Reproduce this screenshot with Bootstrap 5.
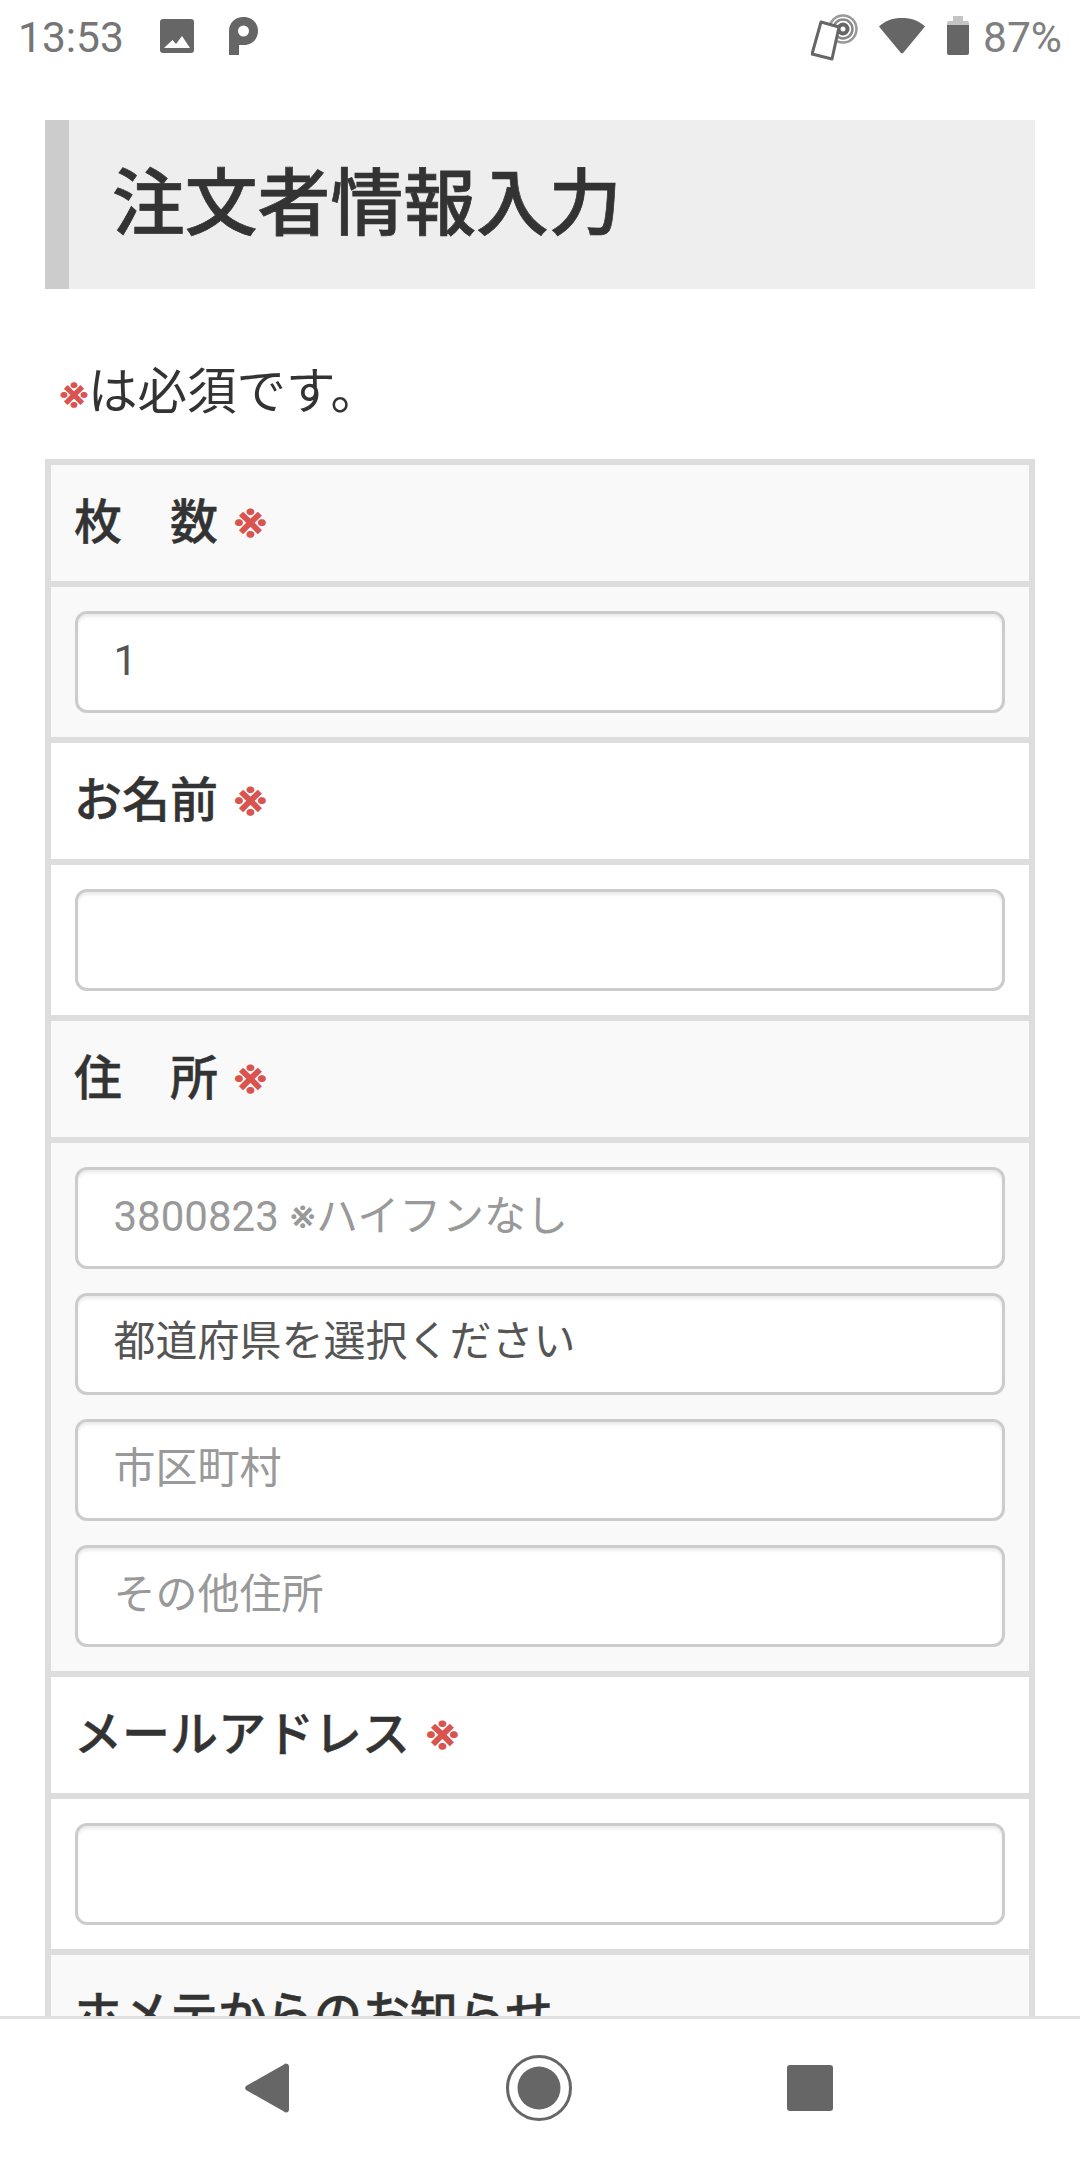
<!DOCTYPE html>
<html lang="ja">
<head>
<meta charset="utf-8">
<title>注文者情報入力</title>
<link href="https://cdn.jsdelivr.net/npm/bootstrap@5.3.0/dist/css/bootstrap.min.css" rel="stylesheet">
<style>
html,body{margin:0;background:#fff;}
body{font-family:Roboto,"Noto Sans CJK JP",sans-serif;color:#333;}
.screen{height:2160px;width:1080px;overflow:hidden;}
.statusbar{height:66px;padding:10px 18px 0 18px;color:#757575;font-size:42.5px;line-height:1;flex:none;}
.statusbar svg{display:block;fill:#666;}
.ic-img{margin-left:36px;margin-top:-4px;}
.ic-p{margin-left:35px;margin-top:-4px;}
.sb-pct{margin-left:14px;color:#808080;}
.ic-nfc{margin-top:-2px;}
.ic-wifi{margin-left:20px;margin-top:-6px;}
.ic-batt{margin-left:22px;margin-top:-6px;}
.page{padding:54px 45px 0 45px;min-height:0;}
.pagetitle{background:#eee;border-left:24px solid #ccc;height:169px;margin:0;padding-left:43px;font-size:72.8px;font-weight:500;-webkit-text-stroke:.7px #333;line-height:155px;color:#333;font-family:"Noto Sans CJK JP",sans-serif;}
.note{font-size:49.5px;line-height:72px;margin:63px 0 0 12px;height:107px;font-family:"Noto Sans CJK JP",sans-serif;}
.redmark{color:#d9534f;font-size:42px;font-family:Inter,sans-serif;font-weight:700;letter-spacing:-3px;}
.formtable{width:990px;margin:0;border:6px solid #ddd;}
.formtable th,.formtable td{border:6px solid #ddd;padding:0 23px 0 23px;}
.formtable th{height:122px;font-size:48px;font-weight:500;-webkit-text-stroke:.4px #333;line-height:60px;padding-bottom:6px;font-family:"Noto Sans CJK JP",sans-serif;color:#333;}
.formtable td{padding:24px 24px;}
.tint{background:#f9f9f9;}
.blank{background:#fff;}
.reqmark{color:#d9534f;-webkit-text-stroke:0;font-size:48px;font-weight:700;margin-left:13px;font-family:Inter,sans-serif;}
.field{height:102px;border:3px solid #ccc;border-radius:12px;background:#fff;box-shadow:inset 0 3px 3px rgba(0,0,0,.075);font-size:42px;line-height:1.4;color:#555;padding:0 35.500px 3px;font-family:Roboto,Inter,"Noto Sans CJK JP",sans-serif;}
.field::placeholder{color:#999;opacity:1;}
.field+.field{margin-top:24px;}
select.field{background-image:none;}
.navfoot{height:144px;flex:none;border-top:3px solid #e0e0e0;background:#fff;position:relative;z-index:2;padding-bottom:3px;}
.navfoot svg{display:block;fill:#666;}
.nav-back{margin-left:245px;}
.nav-home{margin-left:217px;}
.nav-recent{margin-left:215px;}
.mainclip{flex:1 1 0;min-height:0;overflow:hidden;}
</style>
</head>
<body>
<div class="screen d-flex flex-column">
  <div class="statusbar d-flex align-items-center">
    <span>13:53</span>
    <svg class="ic-img" width="34" height="34" viewBox="0 0 34 34"><path fill-rule="evenodd" d="M3 0h28a3 3 0 0 1 3 3v28a3 3 0 0 1-3 3H3a3 3 0 0 1-3-3V3a3 3 0 0 1 3-3zM4 29h26l-8-12-6 8-3.500-4z"/></svg>
    <svg class="ic-p" width="29" height="38" viewBox="0 0 29 38"><path fill-rule="evenodd" d="M14.500 0C23 0 29 6 29 14s-6 14-14 14h-5v10H0V14C0 6 6 0 14.500 0zM14.500 8.500a5.500 5.500 0 0 0 0 11 5.500 5.500 0 0 0 0-11z"/></svg>
    <span class="ms-auto d-flex align-items-center">
      <svg class="ic-nfc" width="48" height="48" viewBox="0 0 48 48"><g fill="none"><circle cx="32" cy="16" r="4.500" stroke="#666" stroke-width="4"/><circle cx="32" cy="16" r="9.500" stroke="#888" stroke-width="2.500"/><circle cx="32" cy="16" r="13.500" stroke="#999" stroke-width="2.500"/><path d="M10 9l18 5-7 32-20-5z" fill="#fff" stroke="#666" stroke-width="3" stroke-linejoin="round"/></g></svg>
      <svg class="ic-wifi" width="46" height="37" viewBox="0 0 46 37"><path d="M0 9.500C6 3.500 14 1 23 1s17 2.500 23 8.500L24.500 35.500a2 2 0 0 1-3 0z"/></svg>
      <svg class="ic-batt" width="22" height="39" viewBox="0 0 22 39"><path fill="#c4c4c4" d="M6 0h10v5h4a2 2 0 0 1 2 2v4H0V7a2 2 0 0 1 2-2h4z"/><path d="M0 9h22v28a2 2 0 0 1-2 2H2a2 2 0 0 1-2-2z"/></svg>
      <span class="sb-pct">87%</span>
    </span>
  </div>
  <div class="mainclip">
    <div class="page">
      <h1 class="pagetitle">注文者情報入力</h1>
      <p class="note"><span class="redmark">※</span>は必須です。</p>
      <table class="formtable">
        <tbody>
          <tr class="tint"><th>枚　数<span class="reqmark">※</span></th></tr>
          <tr class="tint"><td><input class="form-control field" type="text" value="1"></td></tr>
          <tr class="blank"><th>お名前<span class="reqmark">※</span></th></tr>
          <tr class="blank"><td><input class="form-control field" type="text"></td></tr>
          <tr class="tint"><th>住　所<span class="reqmark">※</span></th></tr>
          <tr class="tint"><td>
            <input class="form-control field" type="text" placeholder="3800823 ※ハイフンなし">
            <select class="form-select field"><option>都道府県を選択ください</option></select>
            <input class="form-control field" type="text" placeholder="市区町村">
            <input class="form-control field" type="text" placeholder="その他住所">
          </td></tr>
          <tr class="blank"><th>メールアドレス<span class="reqmark">※</span></th></tr>
          <tr class="blank"><td><input class="form-control field" type="email"></td></tr>
          <tr class="tint"><th>ホメテからのお知らせ</th></tr>
        </tbody>
      </table>
    </div>
  </div>
  <div class="navfoot d-flex align-items-center">
    <svg class="nav-back" width="44" height="50" viewBox="0 0 44 50"><path d="M41 .5a3 3 0 0 1 3 2.500v44a3 3 0 0 1-3 2.500 3 3 0 0 1-2-1L1 27a3 3 0 0 1 0-4L39 1.500a3 3 0 0 1 2-1z"/></svg>
    <svg class="nav-home" width="66" height="66" viewBox="0 0 66 66"><circle cx="33" cy="33" r="31.500" fill="none" stroke="#666" stroke-width="3"/><circle cx="33" cy="33" r="21.500"/></svg>
    <svg class="nav-recent" width="46" height="46" viewBox="0 0 46 46"><rect width="46" height="46" rx="3"/></svg>
  </div>
</div>
<script src="https://cdn.jsdelivr.net/npm/bootstrap@5.3.0/dist/js/bootstrap.bundle.min.js"></script>
</body>
</html>
